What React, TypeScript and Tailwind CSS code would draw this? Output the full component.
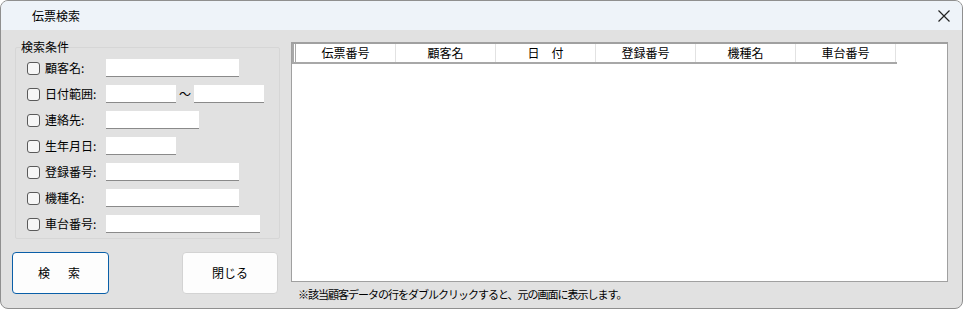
import React from "react";

const font = { fontFamily: '"Noto Sans CJK JP", "Noto Sans", sans-serif' };

const Field = ({ label, width }: { label: string; width: string }) => (
  <div className="flex items-center h-[26px]">
    <span className="w-[13px] h-[13px] rounded-[3px] border border-[#5a5a5a] bg-[#f6f6f6]" />
    <span className="ml-[5px] w-[61px] text-[12px] text-black">{label}</span>
    <span className={`h-[18px] bg-white border-b border-[#8a8a8a] ${width}`} />
  </div>
);

const columns = ["伝票番号", "顧客名", "日　付", "登録番号", "機種名", "車台番号"];

export default function App() {
  return (
    <div
      className="w-[963px] h-[309px] flex flex-col overflow-hidden rounded-[8px] border border-[#8f8f8f] bg-[#e1e1e1] text-black"
      style={font}
    >
      {/* title bar */}
      <div className="h-[29px] flex items-center justify-between bg-[#eef3f9] pl-[31px] pr-[11px]">
        <span className="text-[12px]">伝票検索</span>
        <svg width="14" height="14" viewBox="0 0 14 14">
          <path d="M1.5 1.5 L12.5 12.5 M12.5 1.5 L1.5 12.5" stroke="#222" strokeWidth="1.2" />
        </svg>
      </div>

      <div className="flex flex-1">
        {/* left side */}
        <div className="w-[290px] pl-[11px] pt-[9px]">
          <fieldset className="ml-[3px] w-[265px] border border-[#d6d6d6] pl-[11px] pb-[1px] rounded-[2px]">
            <legend className="-ml-[6px] text-[12px] leading-[16px]">検索条件</legend>
            <Field label="顧客名:" width="w-[133px]" />
            <div className="flex items-center h-[26px]">
              <span className="w-[13px] h-[13px] rounded-[3px] border border-[#5a5a5a] bg-[#f6f6f6]" />
              <span className="ml-[5px] w-[61px] text-[12px]">日付範囲:</span>
              <span className="h-[18px] w-[70px] bg-white border-b border-[#8a8a8a]" />
              <span className="w-[18px] text-center text-[12px] leading-none">～</span>
              <span className="h-[18px] w-[70px] bg-white border-b border-[#8a8a8a]" />
            </div>
            <Field label="連絡先:" width="w-[93px]" />
            <Field label="生年月日:" width="w-[70px]" />
            <Field label="登録番号:" width="w-[133px]" />
            <Field label="機種名:" width="w-[133px]" />
            <Field label="車台番号:" width="w-[154px]" />
          </fieldset>

          <div className="flex mt-[13px]">
            <button className="w-[97px] h-[42px] rounded-[4px] border border-[#0a5fa8] bg-[#fdfdfd] text-[12px] tracking-[3px]">
              検　索
            </button>
            <button className="ml-[73px] w-[96px] h-[42px] rounded-[4px] border border-[#d3d3d3] bg-[#fdfdfd] text-[12px]">
              閉じる
            </button>
          </div>
        </div>

        {/* right side */}
        <div className="flex-1 flex flex-col pt-[12px] pr-[14px]">
          <div className="h-[240px] border border-[#a0a0a0] border-t-2 bg-white">
            <div className="flex h-[20px] w-[605px] border-b-2 border-[#a8a8a8] bg-white">
              <div className="w-[4px] border-l-2 border-r border-[#a8a8a8]" />
              {columns.map((c) => (
                <div
                  key={c}
                  className="w-[100px] flex items-center justify-center border-r border-[#e2e2e2] text-[12px] leading-none"
                >
                  {c}
                </div>
              ))}
            </div>
          </div>
          <div className="pl-[7px] pt-[4px] text-[11px] tracking-[-1px]">
            ※該当顧客データの行をダブルクリックすると、元の画面に表示します。
          </div>
        </div>
      </div>
    </div>
  );
}
